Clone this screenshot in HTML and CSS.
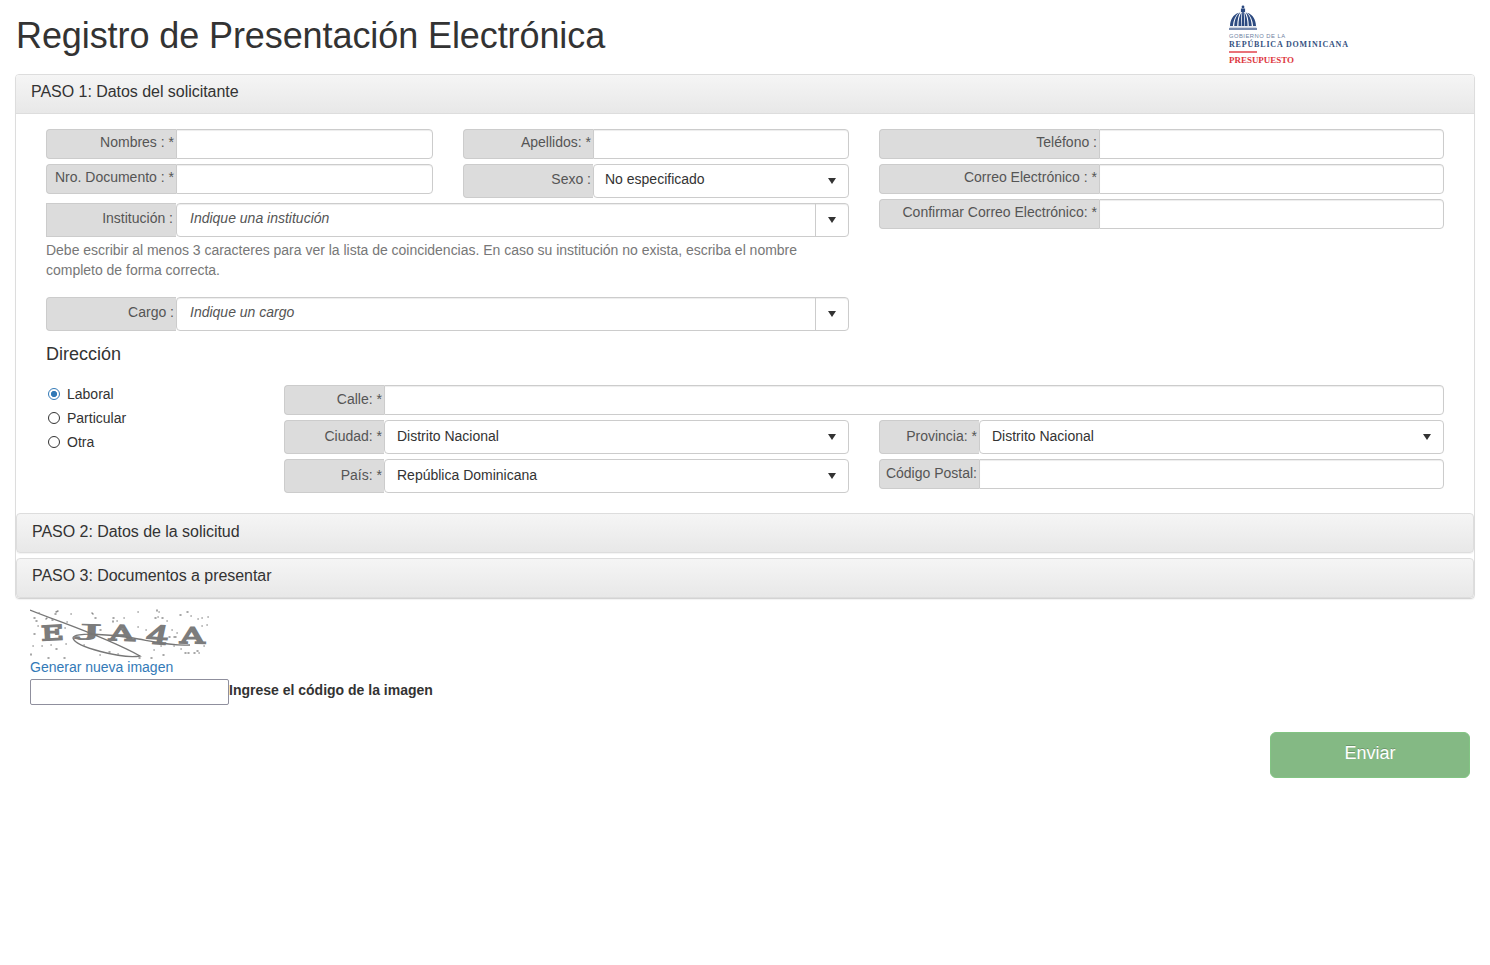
FILE: index.html
```html
<!DOCTYPE html>
<html lang="es">
<head>
<meta charset="utf-8">
<title>Registro de Presentación Electrónica</title>
<link rel="stylesheet" href="styles.css">
</head>
<body>
<header class="page-head">
  <h1>Registro de Presentación Electrónica</h1>
  <svg class="logo" width="124" height="66" viewBox="0 0 124 66" role="img" aria-label="República Dominicana, Presupuesto">
    <g fill="#2c4a80">
      <circle cx="15" cy="7" r="1.4"/>
      <path d="M12.900 8.500h4.200v3.500h-4.200z"/>
      <path d="M10.800 12.800C5 14.800 2.300 19.500 2 26h2.900C5.300 20.500 7.200 15.800 10.800 12.800z"/>
      <path d="M12.400 12C8.400 15 6.600 19.500 6.200 26h3C9.400 20 10.400 15.300 12.400 12z"/>
      <path d="M13.600 12C11.400 15.500 10.500 20 10.400 26h2.800C13.100 20 13.200 16 13.600 12z"/>
      <path d="M14.200 12h1.600l.5 14h-2.600z"/>
      <path d="M16.400 12C18.600 15.500 19.500 20 19.600 26h-2.800C16.900 20 16.800 16 16.400 12z"/>
      <path d="M17.600 12C21.600 15 23.400 19.500 23.800 26h-3C20.600 20 19.600 15.300 17.600 12z"/>
      <path d="M19.200 12.800C25 14.800 27.700 19.500 28 26h-2.900C24.700 20.500 22.800 15.800 19.200 12.800z"/>
    </g>
    <path d="M1.500 27.200h27" stroke="#b4bed2" stroke-width="1"/>
    <path d="M1 29h28" stroke="#2c4a80" stroke-width="1.300"/>
    <text class="logo-gov" x="1" y="38" textLength="56">GOBIERNO DE LA</text>
    <text class="logo-name" x="1" y="46.700" textLength="119">REPÚBLICA DOMINICANA</text>
    <path d="M1 52h28" stroke="#e2434c" stroke-width="1.500"/>
    <text class="logo-unit" x="1" y="62.600" textLength="65" lengthAdjust="spacingAndGlyphs">PRESUPUESTO</text>
  </svg>
</header>

<main>
  <section class="panel">
    <h2 class="panel-head">PASO 1: Datos del solicitante</h2>
    <div class="panel-body">
      <div class="applicant">
        <div class="stack">
          <div class="pair">
            <div class="stack">
              <div class="field"><label>Nombres : *</label><span class="input"></span></div>
              <div class="field"><label>Nro. Documento : *</label><span class="input"></span></div>
            </div>
            <div class="stack">
              <div class="field"><label>Apellidos: *</label><span class="input"></span></div>
              <div class="field tall"><label>Sexo :</label><span class="select">No especificado<i class="arrow"></i></span></div>
            </div>
          </div>
          <div class="field tall square"><label>Institución :</label><span class="combo"><em>Indique una institución</em><b><i class="arrow"></i></b></span></div>
          <p class="help">Debe escribir al menos 3 caracteres para ver la lista de coincidencias. En caso su institución no exista, escriba el nombre completo de forma correcta.</p>
          <div class="field tall"><label>Cargo :</label><span class="combo"><em>Indique un cargo</em><b><i class="arrow"></i></b></span></div>
        </div>
        <div class="stack contact">
          <div class="field"><label>Teléfono :</label><span class="input"></span></div>
          <div class="field"><label>Correo Electrónico : *</label><span class="input"></span></div>
          <div class="field"><label>Confirmar Correo Electrónico: *</label><span class="input"></span></div>
        </div>
      </div>

      <h3>Dirección</h3>
      <div class="address">
        <div class="radios">
          <div class="radio on"><i></i>Laboral</div>
          <div class="radio"><i></i>Particular</div>
          <div class="radio"><i></i>Otra</div>
        </div>
        <div class="address-fields">
          <div class="field wide"><label>Calle: *</label><span class="input"></span></div>
          <div class="field tall"><label>Ciudad: *</label><span class="select">Distrito Nacional<i class="arrow"></i></span></div>
          <div class="field tall"><label>Provincia: *</label><span class="select">Distrito Nacional<i class="arrow"></i></span></div>
          <div class="field tall"><label>País: *</label><span class="select">República Dominicana<i class="arrow"></i></span></div>
          <div class="field"><label>Código Postal:</label><span class="input"></span></div>
        </div>
      </div>
    </div>
    <h2 class="panel-head step">PASO 2: Datos de la solicitud</h2>
    <h2 class="panel-head step last">PASO 3: Documentos a presentar</h2>
  </section>

  <section class="captcha">
    <svg width="180" height="50" viewBox="0 0 180 50" role="img" aria-label="Código">
      <g class="captcha-text">
        <text transform="translate(11.500 31.500) rotate(-3) scale(1.550 1)">E</text>
        <text transform="translate(50 27) rotate(2) scale(2.700 .820)">J</text>
        <text transform="translate(79 31) rotate(2) scale(1.750 1.050)">A</text>
        <text transform="translate(115 34) rotate(4) skewX(-8) scale(1.750 1.250)">4</text>
        <text transform="translate(150 34) rotate(1) scale(1.700 1.100)">A</text>
      </g>
      <path d="M0 1C35 15 76 28 110 47C92 50 45 38 43 29C43 23 80 25 103 29S142 37 160 36" fill="none" stroke="#777" stroke-width="1.300"/>
      <path class="specks" d="M9 4h.2M26 3l2-1M25 5h1M41 5h.2M62 4l1 1M65 9h1M108 3h.2M127 1v1M129 3h.2M150 6h1M157 3h1M4 9h1M6 12h1M17 9l-1 1M22 11h1M37 13h.2M83 9h1M83 12v1M87 12h.2M94 9h.2M125 9h1M128 8h.2M132 9h1M137 12h.2M161 7h.2M168 10h.2M172 9h.2M178 8h.2M4 25h1M8 17h.2M35 19h.2M70 21h1M92 20h1M108 18h.2M116 21h.2M142 21h.2M139 28h1M144 28h2M147 24h.2M172 17h.2M177 16h.2M3 37h.2M12 37h.2M21 36h.2M26 40h1M36 35h.2M54 36h.2M79 43h1M88 45h.2M124 41h.2M131 37h.2M144 37h.2M151 40h.2M155 44h1M158 44h1M164 44h1M167 42h1M169 44h.2M174 37h.2M1 45v1M18 49h1M34 49h1M70 46h.2M109 49h1M121 49h1M133 46h1"/>
    </svg>
    <a class="refresh">Generar nueva imagen</a>
    <div class="code-row"><span class="code-input"></span><strong>Ingrese el código de la imagen</strong></div>
  </section>
  <div class="actions"><button class="send">Enviar</button></div>
</main>
</body>
</html>
```
FILE: styles.css
```css
* { box-sizing: border-box; }
body {
  margin: 0;
  padding: 0 15px;
  background: #fff;
  color: #333;
  font: 14px/20px "Liberation Sans", Arial, sans-serif;
}
h1, h2, h3, p { margin: 0; font-weight: 400; }

.page-head { display: flex; justify-content: space-between; height: 74px; }
.page-head h1 { padding: 16px 0 0 1px; font-size: 36px; line-height: 40px; letter-spacing: -.09px; }
.logo { margin-right: 123px; }
.logo-gov { font: 5.800px "Liberation Sans", sans-serif; fill: #6f7f9f; }
.logo-name { font: bold 8px "Liberation Serif", serif; fill: #35517f; }
.logo-unit { font: bold 8.500px "Liberation Serif", serif; fill: #dd3640; }

.panel { border: 1px solid #ddd; border-radius: 4px; box-shadow: 0 1px 1px rgba(0, 0, 0, .05); }
.panel-head {
  height: 39px;
  padding: 7px 15px 0;
  border-bottom: 1px solid #ddd;
  border-radius: 3px 3px 0 0;
  background: linear-gradient(#f5f5f5, #e8e8e8);
  font-size: 16px;
  line-height: 20px;
  letter-spacing: -.04px;
}
.panel-head.step { height: 40px; padding-top: 8px; border: 1px solid #ddd; border-radius: 4px; box-shadow: 0 1px 1px rgba(0, 0, 0, .05); }
.panel-head.step.last { margin-top: 5px; padding-top: 7px; }
.panel-body { height: 399px; padding: 15px 30px 0; }

.applicant { display: grid; grid-template-columns: 803px 565px; gap: 30px; }
.stack { display: flex; flex-direction: column; gap: 5px; }
.pair { display: grid; grid-template-columns: 387px 386px; gap: 30px; }

.field { display: flex; height: 30px; }
.field.tall { height: 34px; }
.field label {
  flex: none;
  width: 130px;
  padding: 2px 2px 0 0;
  border: 1px solid #ccc;
  border-right: 0;
  border-radius: 4px 0 0 4px;
  background: #dcdcdc;
  color: #555;
  text-align: right;
}
.field.tall label { padding-top: 4px; }
.field.square label { padding-right: 3px; border-radius: 0; }
.contact label { width: 220px; }
.address-fields label { width: 100px; padding-top: 3px; }
.address-fields .tall label { padding-top: 5px; }

.input, .select, .combo { flex: 1; border: 1px solid #ccc; background: #fff; }
.input { border-radius: 0 4px 4px 0; box-shadow: inset 0 1px 1px rgba(0, 0, 0, .075); }
.select, .combo { display: flex; justify-content: space-between; border-radius: 4px; }
.select { padding: 4px 12px 0 11px; }
.address-fields .select { padding-top: 5px; padding-left: 12px; }
.combo { box-shadow: inset 0 1px 1px rgba(0, 0, 0, .075); }
.combo em { padding: 4px 0 0 13px; color: #555; }
.combo b { width: 33px; padding-left: 12px; border-left: 1px solid #ccc; }
.arrow {
  display: block;
  width: 8px;
  height: 6px;
  margin-top: 9px;
  background: #333;
  clip-path: polygon(0 0, 100% 0, 50% 100%);
}
.address-fields .arrow { margin-top: 8px; }
.combo .arrow { margin-top: 13px; }
.help { height: 50px; margin-top: -2px; padding-right: 20px; color: #777; letter-spacing: -.012px; }
.help + .field { margin-top: 2px; }

h3 { height: 54px; padding-top: 13px; font-size: 18px; line-height: 20px; }
.address { display: grid; grid-template-columns: 208px 1160px; gap: 30px; }
.radio { display: flex; gap: 7px; height: 24px; padding-left: 2px; line-height: 18px; }
.radio i { width: 12px; height: 12px; margin-top: 3px; border: 1px solid #333; border-radius: 50%; }
.radio.on i { border-color: #337ab7; background: radial-gradient(#337ab7 0 2.800px, #fff 3.300px); }
.address-fields { display: grid; grid-template-columns: 565px 565px; gap: 5px 30px; }
.address-fields .wide { grid-column: 1 / 3; }

.captcha { padding: 10px 15px 0; }
.captcha svg { display: block; }
.captcha-text { font: 20px "DejaVu Serif", serif; fill: #7c7c7c; stroke: #7c7c7c; stroke-width: 2; }
.captcha-text text { vector-effect: non-scaling-stroke; }
.specks { fill: none; stroke: #8c8c8c; stroke-width: 1.500; stroke-linecap: round; }
.refresh { display: block; height: 20px; margin-top: -2px; color: #337ab7; }
.code-row { display: flex; margin-top: 2px; }
.code-input { width: 199px; height: 26px; border: 1px solid #8f8f9d; border-radius: 2px; }
.code-row strong { padding-top: 1px; }
.actions { display: flex; justify-content: flex-end; padding: 27px 5px 0 0; }
.send {
  width: 200px;
  height: 46px;
  padding: 0 0 4px;
  border: 1px solid #82c483;
  border-radius: 6px;
  background: #84b984;
  color: #fff;
  font: 18px/24px "Liberation Sans", Arial, sans-serif;
  text-shadow: 0 -1px 0 rgba(0, 0, 0, .2);
}
```
